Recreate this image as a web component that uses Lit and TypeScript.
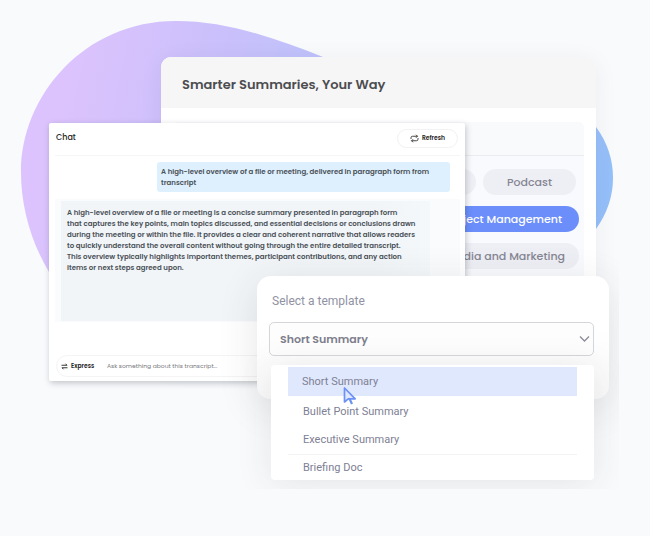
import { LitElement, html, css } from "lit";
import { customElement, state } from "lit/decorators.js";
import { classMap } from "lit/directives/class-map.js";

const reset = css`
  *, *::before, *::after { box-sizing: border-box; }
  h1, h2, p, ul { margin: 0; padding: 0; }
  ul { list-style: none; }
  button, input, select { font: inherit; color: inherit; margin: 0; border: 0; background: none; }
`;

@customElement("summary-card")
class SummaryCard extends LitElement {
  static styles = [reset, css`
    :host { display: block; font-family: Poppins, Inter, sans-serif; }
    .card { border-radius: 10px; background: #fff; box-shadow: 0 4px 24px rgba(40, 40, 50, 0.06); overflow: hidden; }
    .head { background: #f6f6f6; padding: 18px 21px 14px; }
    .title { font-size: 13px; line-height: 19px; font-weight: 600; color: #4d4d50; }
    .body { padding: 14px 12px; }
    .panel { background: #f9fafd; border-radius: 6px; height: 230px; }
    .bar { height: 34px; border-bottom: 1px solid #eaecf0; background: #f8fafc; border-radius: 6px 6px 0 0; }
    .rows { display: flex; flex-direction: column; gap: 11px; padding: 13px 5px; }
    .row { display: flex; justify-content: flex-end; gap: 7px; }
    .pair { padding-right: 3px; }
    .chip { height: 26px; padding: 0 14px; border-radius: 13px; background: #eeeef5; color: #858692; font-size: 11px; font-weight: 500; line-height: 26px; white-space: nowrap; }
    .pair .chip { padding: 0 24px; }
    .on { background: #6b8efb; color: #fff; padding: 0 17px; }
  `];
  rows = [["Meeting", "Podcast"], ["Project Management"], ["Media and Marketing"]];
  render() {
    return html`<section class="card">
      <header class="head"><h1 class="title">Smarter Summaries, Your Way</h1></header>
      <div class="body"><div class="panel">
        <div class="bar"></div>
        <div class="rows">
          ${this.rows.map(r => html`<div class=${classMap({ row: true, pair: r.length > 1 })}>${r.map(c => html`
            <button class=${classMap({ chip: true, on: c === "Project Management" })}>${c}</button>`)}</div>`)}
        </div>
      </div></div>
    </section>`;
  }
}

@customElement("chat-card")
class ChatCard extends LitElement {
  static styles = [reset, css`
    :host { display: block; font-family: Poppins, Inter, sans-serif; color: #4a5057; }
    .card { background: #fff; border-radius: 2px; padding: 6px 5px 4px 6px; box-shadow: 1px 2px 6px rgba(40, 44, 54, 0.26); }
    .head { display: flex; align-items: center; justify-content: space-between; height: 27px; padding: 0 2px 8px 1px; border-bottom: 1px solid #f4f5f6; }
    .title { font-size: 8px; line-height: 12px; font-weight: 500; color: #222; }
    .refresh { display: flex; align-items: center; justify-content: center; gap: 3px; width: 61px; height: 19px; border: 1px solid #f2f2f4; border-radius: 10px; font-size: 6px; font-weight: 600; color: #222; padding: 0; }
    .ask { margin: 6px 10px 7px 102px; background: #def0fe; border-radius: 3px; padding: 4px 4px; }
    .text { font-size: 7px; line-height: 11px; font-weight: 600; white-space: nowrap; }
    .answer { height: 123px; padding: 2px 30px 1px 6px; background: #f9fbfc; }
    .inner { height: 100%; background: linear-gradient(90deg, #f1f5f8, #f1f5f8 85%, #f4f8fa); padding: 6px; }
    .foot { display: flex; align-items: center; gap: 4px; margin: 33px 0 0 1px; height: 22px; padding: 0 4px; border: 1px solid #f4f4f5; border-radius: 11px; }
    .mode { display: flex; align-items: center; gap: 3px; padding: 0; font-size: 6px; font-weight: 600; color: #222; width: 42px; }
    .input { flex: 1; min-width: 0; padding: 0; font-size: 6px; outline: 0; }
    .input::placeholder { color: #77797d; opacity: 1; }
  `];
  render() {
    return html`<section class="card">
      <header class="head">
        <h2 class="title">Chat</h2>
        <button class="refresh">
          <svg width="9" height="9" viewBox="0 0 18 18" fill="none" stroke="#333" stroke-width="1.8"><path d="M2 10V7.500q0-3 3-3h10M12 1.500l3 3-3 3M16 8v2.500q0 3-3 3H3M6 10.500l-3 3 3 3"/></svg>
          Refresh
        </button>
      </header>
      <div class="ask"><p class="text">A high-level overview of a file or meeting, delivered in paragraph form from<br>transcript</p></div>
      <div class="answer"><div class="inner"><p class="text">A high-level overview of a file or meeting is a concise summary presented in paragraph form<br>that captures the key points, main topics discussed, and essential decisions or conclusions drawn<br>during the meeting or within the file. It provides a clear and coherent narrative that allows readers<br>to quickly understand the overall content without going through the entire detailed transcript.<br>This overview typically highlights important themes, participant contributions, and any action<br>items or next steps agreed upon.</p></div></div>
      <div class="foot">
        <button class="mode">
          <svg width="7" height="7" viewBox="0 0 14 14" fill="none" stroke="#222" stroke-width="1.8"><path d="M1 4.500h11M9 1.500l3 3M13 9.500H2M5 12.500l-3-3"/></svg>
          Express
        </button>
        <input class="input" aria-label="Ask something about this transcript" placeholder="Ask something about this transcript...">
      </div>
    </section>`;
  }
}

@customElement("template-picker")
class TemplatePicker extends LitElement {
  static styles = [reset, css`
    :host { display: block; font-family: Roboto, sans-serif; color: #7e8094; clip-path: inset(-40px -10px -9px -60px); }
    .card { border-radius: 14px; background: linear-gradient(#fff 40%, #f9f9fa); padding: 17px 15px 43px 12px; box-shadow: 0 8px 40px rgba(50, 50, 50, 0.12); }
    .label { display: block; padding-left: 3px; font-size: 12px; line-height: 16px; color: #9092a4; }
    .field { display: grid; align-items: center; margin-top: 13px; }
    .select { grid-area: 1 / 1; appearance: none; width: 100%; height: 34px; border: 1px solid #d5d6da; border-radius: 5px; padding: 0 10px; font-family: Poppins, Inter, sans-serif; font-size: 11px; font-weight: 600; color: #7e7f8d; background: #fdfdfd; }
    .arrow { grid-area: 1 / 1; justify-self: end; margin-right: 4px; pointer-events: none; }
    .menu { position: relative; margin: -34px 15px 0 14px; background: #fff; border-radius: 4px; padding: 2px 17px 0; box-shadow: 0 4px 36px rgba(50, 50, 50, 0.1); }
    .item { display: block; width: 100%; height: 28px; padding: 0 15px; text-align: left; font-size: 11px; line-height: 28px; }
    .on { height: 29px; line-height: 30px; background: #e0e8fd; padding: 0 14px; margin-bottom: 2px; }
    .last { height: 26px; line-height: 26px; border-top: 1px solid #f2f2f5; }
    .cursor { position: absolute; left: 71px; top: 21px; }
  `];
  @state() chosen = "Short Summary";
  names = ["Short Summary", "Bullet Point Summary", "Executive Summary", "Briefing Doc"];
  render() {
    return html`
      <section class="card">
        <label class="label" for="tpl">Select a template</label>
        <div class="field">
          <select class="select" id="tpl">${this.names.map(n => html`<option ?selected=${n === this.chosen}>${n}</option>`)}</select>
          <svg class="arrow" width="11" height="8" viewBox="0 0 11 8" fill="none" stroke="#8b8c98" stroke-width="1.3"><path d="M1 1.500l4.500 4.500 4.500-4.500"/></svg>
        </div>
      </section>
      <div class="menu">
        <ul>${this.names.map((n, i) => html`<li><button class=${classMap({ item: true, on: n === this.chosen, last: i === 3 })} @click=${() => (this.chosen = n)}>${n}</button></li>`)}</ul>
        <svg class="cursor" width="16" height="20" viewBox="0 0 16 20" fill="#e0e8fd" stroke="#6d92f5" stroke-width="1.7" stroke-linejoin="round"><path d="M2.500 2v14l3.700-3.200h7z"/><path d="M7.400 12.600l2.600 5.400" fill="none" stroke-width="2.2"/></svg>
      </div>`;
  }
}

@customElement("app-root")
class AppRoot extends LitElement {
  static styles = css`
    :host { display: block; min-height: 100vh; background: #f8fafc; }
    .stage { display: grid; grid-template-columns: minmax(0, 1fr); align-items: start; padding-bottom: 40px; }
    .stage > * { grid-area: 1 / 1; }
    .blob { width: 100%; height: 380px; }
    .summary { margin: 57px 54px 0 161px; }
    .chat { margin: 123px 185px 0 49px; }
    .picker { margin: 276px 41px 0 257px; }
  `;
  render() {
    return html`<main class="stage">
      <svg class="blob" viewBox="0 0 650 380" preserveAspectRatio="none" aria-hidden="true">
        <defs><linearGradient id="g" gradientUnits="userSpaceOnUse" x1="60" y1="110" x2="610" y2="230">
          <stop offset="0" stop-color="#dcc3fd"/><stop offset="0.24" stop-color="#cbc0fb"/><stop offset="0.5" stop-color="#bac2fb"/><stop offset="1" stop-color="#93bff9"/>
        </linearGradient></defs>
        <path fill="url(#g)" d="M21 172C21 96 84 21 176 21C226 21 272 37 323 57C400 88 520 78 570 105Q586 112 596 127Q613 150 613 178Q613 205 596 229C560 290 480 330 400 340C240 370 90 360 49 272C30 240 21 205 21 172Z"/>
      </svg>
      <summary-card class="summary"></summary-card>
      <chat-card class="chat"></chat-card>
      <template-picker class="picker"></template-picker>
    </main>`;
  }
}
